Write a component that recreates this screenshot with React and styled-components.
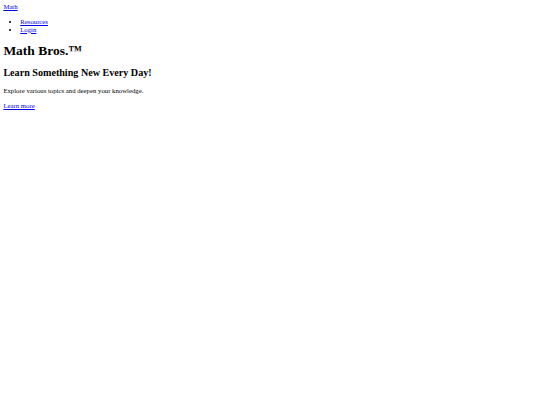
import React from 'react';
import styled, { createGlobalStyle } from 'styled-components';

// the reference is a plain default-styled page shown at 0.421875 scale
const GlobalStyle = createGlobalStyle`
  body {
    margin: 3.375px;
    font-family: 'Liberation Serif', 'Times New Roman', serif;
    font-size: 6.75px;
    line-height: 7.8px;
    color: #000;
    background: #fff;
  }
  a {
    color: #0000ee;
  }
`;

const Nav = styled.nav`
  display: block;
`;

const NavList = styled.ul`
  margin: 1em 0;
  padding-left: 16.875px;
  list-style: disc;
`;

const Title = styled.h1`
  font-size: 2em;
  line-height: 15.5px;
  font-weight: bold;
  margin: 0.67em 0;
`;

const Subtitle = styled.h2`
  font-size: 1.5em;
  line-height: 11.7px;
  font-weight: bold;
  margin: 0.83em 0;
`;

const Text = styled.p`
  margin: 1em 0;
`;

const App = () => {
  return (
    <>
      <GlobalStyle />
      <Nav>
        <a href="#">Math</a>
        <NavList>
          <li>
            <a href="#">Resources</a>
          </li>
          <li>
            <a href="#">Login</a>
          </li>
        </NavList>
      </Nav>
      <main>
        <Title>Math Bros.™</Title>
        <Subtitle>Learn Something New Every Day!</Subtitle>
        <Text>Explore various topics and deepen your knowledge.</Text>
        <a href="#">Learn more</a>
      </main>
    </>
  );
};

export default App;
